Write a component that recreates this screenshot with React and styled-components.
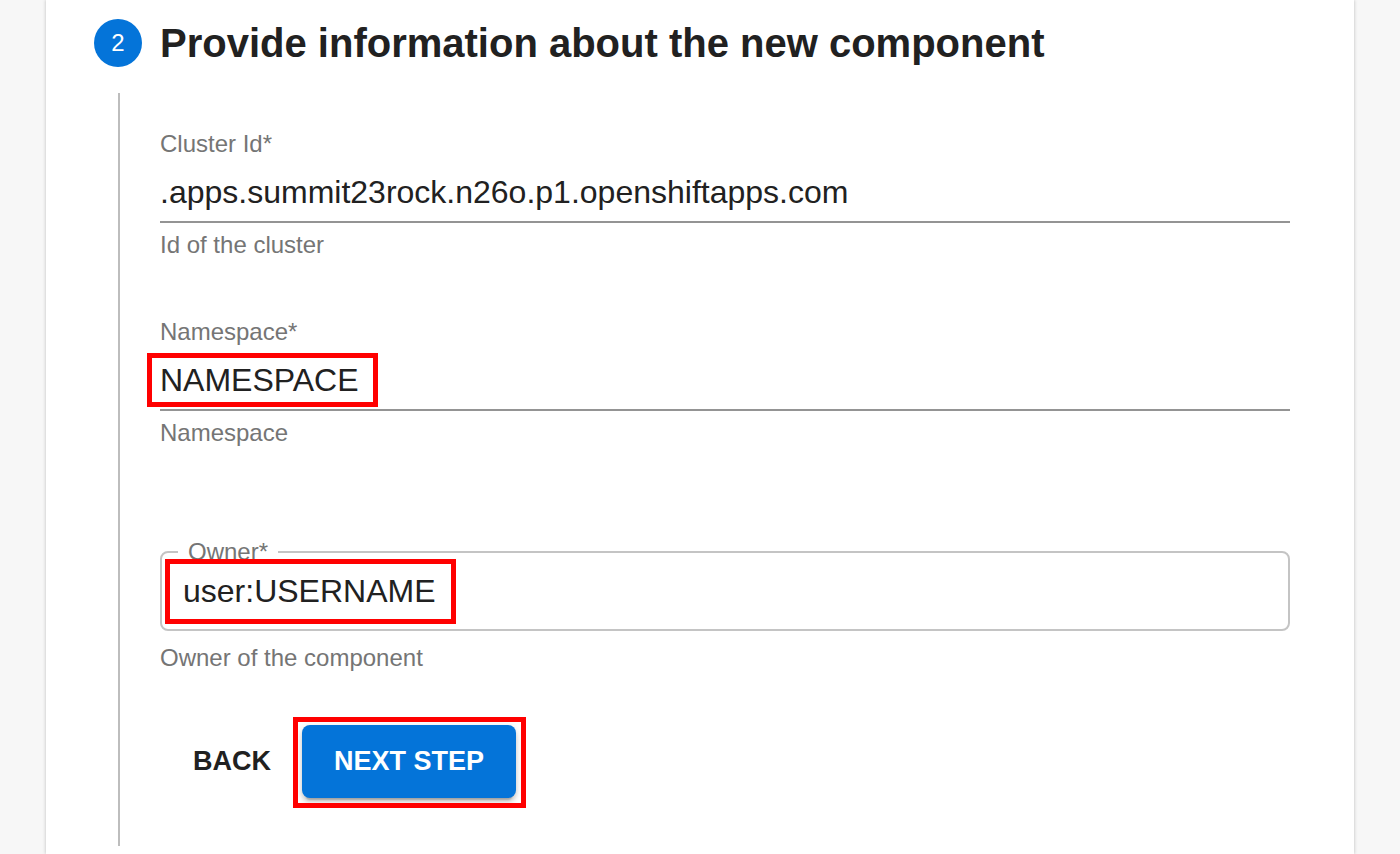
import React from "react";
import styled, { createGlobalStyle } from "styled-components";

const Global = createGlobalStyle`
  html, body { margin: 0; padding: 0; }
  body {
    background: #f7f7f7;
    font-family: "Liberation Sans", Arial, sans-serif;
    -webkit-font-smoothing: antialiased;
  }
`;

const BLUE = "#0474d9";

const Page = styled.div`
  height: 854px;
  overflow: hidden;
  padding: 0 46px;
  background: #f7f7f7;
`;

const Panel = styled.main`
  background: #fff;
  min-height: 854px;
  box-sizing: border-box;
  padding: 19px 48px 0;
  box-shadow: -1px 0 3px rgba(0, 0, 0, 0.12), 1px 0 3px rgba(0, 0, 0, 0.12);
`;

const StepHeader = styled.div`
  display: flex;
  align-items: center;
  height: 48px;
`;

const StepIcon = styled.span`
  width: 48px;
  height: 48px;
  flex: none;
  border-radius: 50%;
  background: ${BLUE};
  color: #fff;
  font-size: 24px;
  display: flex;
  align-items: center;
  justify-content: center;
`;

const StepTitle = styled.h2`
  margin: 0;
  padding-left: 18px;
  font-size: 40px;
  line-height: 48px;
  font-weight: 700;
  color: #212121;
`;

const StepContent = styled.section`
  margin: 26px 0 0 24px;
  border-left: 2px solid #bdbdbd;
  padding: 39px 16px 48px 40px;
  display: flex;
  flex-direction: column;
`;

const Field = styled.div`
  display: flex;
  flex-direction: column;
  margin-top: ${(p) => p.$gap || 0}px;
`;

const Label = styled.label`
  font-size: 24px;
  line-height: 24px;
  color: #757575;
`;

const InputRow = styled.div`
  margin-top: 17px;
  padding-bottom: 10px;
  border-bottom: 2px solid #949494;
  font-size: 32px;
  line-height: 38px;
  color: #212121;
`;

const Helper = styled.p`
  margin: ${(p) => p.$top || 8}px 0 0;
  font-size: 24px;
  line-height: 28px;
  color: #757575;
`;

const Outlined = styled.fieldset`
  margin: 0;
  padding: 8px 22px 19px 21px;
  border: 2px solid #c4c4c4;
  border-radius: 8px;
  min-width: 0;
`;

const Legend = styled.legend`
  margin-left: -5px;
  padding: 0 10px;
  font-size: 24px;
  line-height: 24px;
  color: #757575;
`;

const OutlinedValue = styled.div`
  font-size: 32px;
  line-height: 38px;
  color: #212121;
`;

const Marked = styled.span`
  position: relative;
  display: inline-flex;
  align-self: flex-start;
  &::after {
    content: "";
    position: absolute;
    inset: ${(p) => p.$inset};
    border: 5px solid #ff0000;
    pointer-events: none;
  }
`;

const Actions = styled.div`
  display: flex;
  align-items: center;
  gap: 15px;
  margin-top: 53px;
  padding-left: 17px;
`;

const TextButton = styled.button`
  border: 0;
  background: transparent;
  padding: 12px 16px;
  font-family: inherit;
  font-size: 27px;
  font-weight: 700;
  color: #212121;
  cursor: pointer;
`;

const PrimaryButton = styled.button`
  border: 0;
  height: 73px;
  padding: 0 32px;
  border-radius: 8px;
  background: ${BLUE};
  color: #fff;
  font-family: inherit;
  font-size: 27px;
  font-weight: 700;
  cursor: pointer;
  box-shadow: 0 6px 2px -4px rgba(0, 0, 0, 0.2), 0 4px 4px 0 rgba(0, 0, 0, 0.14),
    0 2px 10px 0 rgba(0, 0, 0, 0.12);
`;

export default function App() {
  return (
    <>
      <Global />
      <Page>
        <Panel>
          <StepHeader>
            <StepIcon>2</StepIcon>
            <StepTitle>Provide information about the new component</StepTitle>
          </StepHeader>
          <StepContent>
            <Field>
              <Label>Cluster Id*</Label>
              <InputRow>.apps.summit23rock.n26o.p1.openshiftapps.com</InputRow>
              <Helper>Id of the cluster</Helper>
            </Field>
            <Field $gap={61}>
              <Label>Namespace*</Label>
              <InputRow>
                <Marked $inset="-8px -19px -8px -13px">NAMESPACE</Marked>
              </InputRow>
              <Helper>Namespace</Helper>
            </Field>
            <Field $gap={93}>
              <Outlined>
                <Legend>Owner*</Legend>
                <OutlinedValue>
                  <Marked $inset="-13px -20px -14px -18px">user:USERNAME</Marked>
                </OutlinedValue>
              </Outlined>
              <Helper $top={13}>Owner of the component</Helper>
            </Field>
            <Actions>
              <TextButton>BACK</TextButton>
              <Marked $inset="-8px -10px -10px -9px">
                <PrimaryButton>NEXT STEP</PrimaryButton>
              </Marked>
            </Actions>
          </StepContent>
        </Panel>
      </Page>
    </>
  );
}
